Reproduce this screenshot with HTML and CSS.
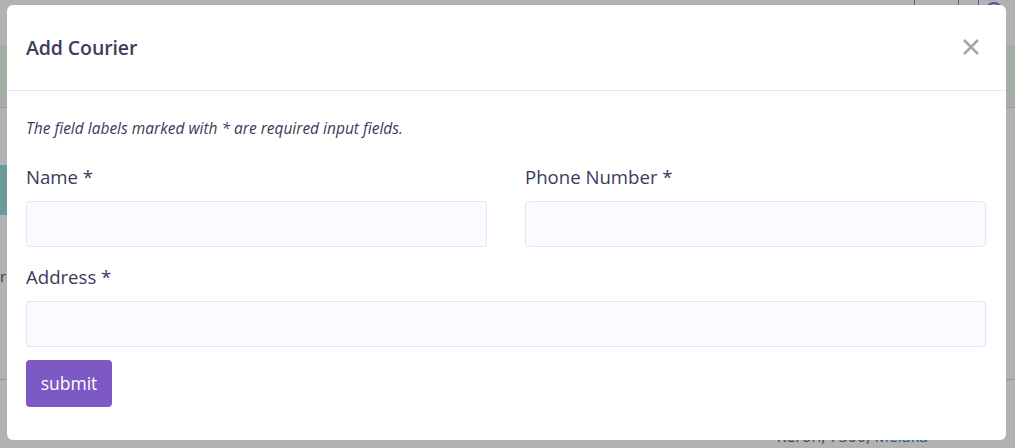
FILE: index.html
```html
<!DOCTYPE html>
<html lang="en">
<head>
<meta charset="utf-8">
<title>Add Courier</title>
<link rel="stylesheet" href="styles.css">
</head>
<body>
<div class="page">
  <div class="topbar">
    <div class="topbar-tools">
      <span class="tool"></span>
      <span class="tool narrow"></span>
      <span class="avatar"></span>
    </div>
  </div>
  <div class="band-green"></div>
  <div class="gap-a"></div>
  <div class="band-teal"></div>
  <div class="row-text">rc</div>
  <div class="rule"></div>
  <div class="addr-row"><span class="addr">Keron, 7300, <span class="city">Melaka</span></span></div>
</div>
<div class="backdrop"></div>
<div class="modal">
  <div class="modal-header">
    <h2 class="modal-title">Add Courier</h2>
    <button class="close" type="button" aria-label="Close">
      <svg width="18" height="18" viewBox="0 0 18 18"><path d="M2 2 L16 16 M16 2 L2 16" stroke="#a6a6a6" stroke-width="2.6" stroke-linecap="butt"/></svg>
    </button>
  </div>
  <div class="modal-body">
    <p class="note">The field labels marked with * are required input fields.</p>
    <div class="grid">
      <div class="field">
        <label class="label">Name *</label>
        <input class="input" type="text">
      </div>
      <div class="field">
        <label class="label">Phone Number *</label>
        <input class="input" type="text">
      </div>
      <div class="field full">
        <label class="label">Address *</label>
        <input class="input" type="text">
      </div>
    </div>
    <button class="submit" type="button">submit</button>
  </div>
</div>
</body>
</html>
```

FILE: styles.css
```css
html, body {
  margin: 0;
  padding: 0;
  height: 100%;
  overflow: hidden;
}
body {
  background: #ffffff;
  font-family: "Open Sans", "Noto Sans", sans-serif;
}

/* background page */
.page {
  display: flex;
  flex-direction: column;
  height: 448px;
}
.topbar {
  height: 45px;
  display: flex;
  justify-content: flex-end;
}
.topbar-tools {
  display: flex;
  align-items: flex-start;
  height: 45px;
}
.tool {
  width: 43px;
  height: 40px;
  border-left: 1px solid #9b7ad6;
  border-right: 1px solid #9b7ad6;
}
.tool.narrow {
  width: 19px;
  border-left: none;
}
.avatar {
  width: 14px;
  height: 14px;
  margin: 2px 12px 0 6px;
  border-radius: 50%;
  border: 2px solid #8a63d2;
}
.band-green {
  height: 62px;
  background: #edfaec;
  border-bottom: 1px solid #d6d6d6;
}
.gap-a {
  height: 57px;
}
.band-teal {
  width: 20px;
  height: 50px;
  background: #97dcdc;
}
.row-text {
  height: 74px;
  padding-top: 50px;
  box-sizing: border-box;
  font-size: 15px;
  line-height: 22px;
  color: #555;
}
.rule {
  height: 90px;
  border-bottom: 1px solid #cfcfcf;
}
.addr-row {
  display: flex;
  justify-content: flex-end;
  padding-right: 87px;
  padding-top: 45px;
}
.addr {
  font-size: 16px;
  color: #666677;
}
.city {
  color: #3a7bd5;
}

.backdrop {
  position: fixed;
  inset: 0;
  background: rgba(0, 0, 0, 0.3);
}

/* modal */
.modal {
  position: fixed;
  left: 7px;
  top: 5px;
  width: 999px;
  height: 435px;
  background: #ffffff;
  border-radius: 6px;
  box-sizing: border-box;
  color: #3c3a5a;
}
.modal-header {
  height: 86px;
  box-sizing: border-box;
  border-bottom: 1px solid #e9e7f3;
  display: flex;
  align-items: center;
  justify-content: space-between;
  padding: 0 26px 0 19px;
}
.modal-title {
  margin: 0;
  font-size: 19.5px;
  font-weight: 600;
  color: #3f3c5e;
  letter-spacing: -0.1px;
  padding-bottom: 0;
}
.close {
  background: none;
  border: 0;
  padding: 0;
  width: 18px;
  height: 18px;
  display: flex;
  margin-bottom: 2px;
}
.modal-body {
  padding: 27px 20px 0 19px;
}
.note {
  margin: 0;
  font-style: italic;
  font-size: 15.5px;
  line-height: 20px;
  color: #3c3a5a;
}
.grid {
  display: grid;
  grid-template-columns: 1fr 1fr;
  column-gap: 38px;
  row-gap: 18px;
  margin-top: 27px;
}
.field {
  display: flex;
  flex-direction: column;
  gap: 12px;
}
.field.full {
  grid-column: 1 / -1;
}
.label {
  font-size: 18.6px;
  line-height: 24px;
  color: #3c3a5a;
}
.input {
  height: 46px;
  box-sizing: border-box;
  border: 1px solid #e5e3f6;
  border-radius: 4px;
  background: #fbfbff;
  font: inherit;
  padding: 0 12px;
}
.submit {
  margin-top: 13px;
  width: 86px;
  height: 47px;
  background: #7c59c3;
  border: 0;
  border-radius: 4px;
  color: #ffffff;
  font-family: "Open Sans", "Noto Sans", sans-serif;
  font-size: 17.5px;
  padding: 0 0 2px;
}
```
